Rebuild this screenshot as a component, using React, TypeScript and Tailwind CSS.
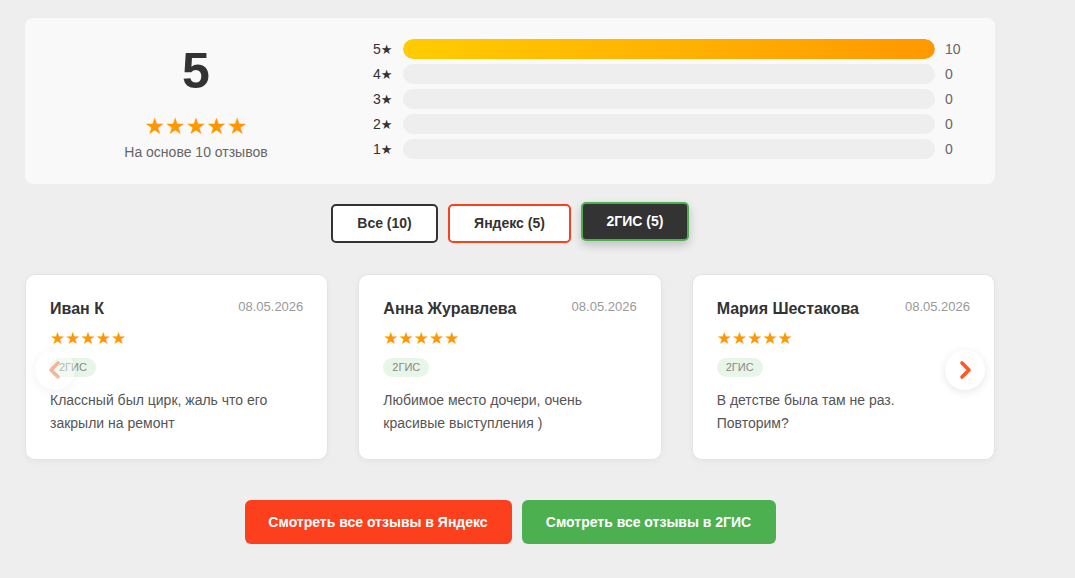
import React from "react";

type Review = { name: string; date: string; text: string };

const reviews: Review[] = [
  { name: "Иван К", date: "08.05.2026", text: "Классный был цирк, жаль что его закрыли на ремонт" },
  { name: "Анна Журавлева", date: "08.05.2026", text: "Любимое место дочери, очень красивые выступления )" },
  { name: "Мария Шестакова", date: "08.05.2026", text: "В детстве была там не раз. Повторим?" },
];

const distribution = [
  { stars: 5, count: 10 },
  { stars: 4, count: 0 },
  { stars: 3, count: 0 },
  { stars: 2, count: 0 },
  { stars: 1, count: 0 },
];

function Chevron({ dir }: { dir: "left" | "right" }) {
  return (
    <svg width="14" height="20" viewBox="0 0 14 20" fill="none">
      <path
        d={dir === "right" ? "M4 3l7 7-7 7" : "M10 3l-7 7 7 7"}
        stroke="#ff5722"
        strokeWidth="3.6"
        strokeLinecap="round"
        strokeLinejoin="round"
      />
    </svg>
  );
}

export default function App() {
  const total = 10;
  return (
    <div className="min-h-[578px] w-full bg-[#eeeeee] font-['Liberation_Sans','DejaVu_Sans',sans-serif]">
      <div className="w-[970px] ml-[25px] pt-[18px]">
        {/* Rating summary */}
        <div className="flex h-[166px] rounded-[8px] bg-[#f9f9f9] pl-[30px] pr-[30px]">
          <div className="flex w-[282px] flex-col items-center pt-[25px]">
            <div className="text-[50px] font-bold leading-[56px] text-[#333333]">5</div>
            <div className="mt-[15px] text-[23px] leading-[24px] text-[#ff9800]">★★★★★</div>
            <div className="mt-[5px] text-[14px] leading-[18px] text-[#666666]">На основе 10 отзывов</div>
          </div>
          <div className="ml-[36px] flex flex-1 flex-col gap-[5px] pt-[21px]">
            {distribution.map((d) => (
              <div key={d.stars} className="flex h-[20px] items-center">
                <div className="w-[20px] whitespace-nowrap text-[14px] leading-[20px] text-[#333333]">
                  {d.stars}
                  <span className="text-[13px]">★</span>
                </div>
                <div className="ml-[10px] h-[20px] flex-1 overflow-hidden rounded-full bg-[#eeeeee]">
                  <div
                    className="h-full rounded-full bg-gradient-to-r from-[#ffcc00] to-[#ff9800]"
                    style={{ width: `${(d.count / total) * 100}%` }}
                  />
                </div>
                <div className="ml-[10px] w-[20px] text-[14px] leading-[20px] text-[#666666]">{d.count}</div>
              </div>
            ))}
          </div>
        </div>

        {/* Source tabs */}
        <div className="mt-[20px] flex justify-center gap-[10px]">
          <button className="h-[39px] w-[107px] rounded-[5px] border-2 border-[#333333] bg-white text-[14px] font-bold text-[#333333]">
            Все (10)
          </button>
          <button className="h-[39px] w-[123px] rounded-[5px] border-2 border-[#fc3f1d] bg-white text-[14px] font-bold text-[#333333]">
            Яндекс (5)
          </button>
          <button className="-mt-[2px] h-[39px] w-[108px] rounded-[5px] border-2 border-[#4caf50] bg-[#333333] text-[14px] font-bold text-white shadow-[0_4px_10px_rgba(0,0,0,0.2)]">
            2ГИС (5)
          </button>
        </div>

        {/* Review carousel */}
        <div className="relative mt-[31px]">
          <div className="grid grid-cols-3 gap-[30px]">
            {reviews.map((r) => (
              <div
                key={r.name}
                className="rounded-[10px] border border-[#e4e4e4] bg-white p-[24px] shadow-[0_2px_6px_rgba(0,0,0,0.04)]"
              >
                <div className="flex items-start justify-between">
                  <div className="text-[16px] font-bold leading-[20px] text-[#333333]">{r.name}</div>
                  <div className="text-[13px] leading-[15px] text-[#999999]">{r.date}</div>
                </div>
                <div className="mt-[10px] text-[17px] leading-[20px] text-[#ff9800]">★★★★★</div>
                <div className="mt-[9px] inline-block rounded-full bg-[#e8f5e9] px-[9px] text-[11px] leading-[19px] text-[#888888]">
                  2ГИС
                </div>
                <p className="mt-[11px] text-[14px] leading-[23px] text-[#555555]">{r.text}</p>
              </div>
            ))}
          </div>
          <button className="absolute left-[10px] top-[76px] flex h-[40px] w-[40px] items-center justify-center rounded-full bg-white opacity-40 shadow-[0_2px_8px_rgba(0,0,0,0.12)]">
            <Chevron dir="left" />
          </button>
          <button className="absolute right-[10px] top-[76px] flex h-[40px] w-[40px] items-center justify-center rounded-full bg-white shadow-[0_2px_8px_rgba(0,0,0,0.1)]">
            <Chevron dir="right" />
          </button>
        </div>

        {/* External links */}
        <div className="mt-[40px] flex justify-center gap-[10px]">
          <a className="flex h-[44px] w-[267px] items-center justify-center rounded-[6px] bg-[#fc3f1d] text-[14px] font-bold text-white">
            Смотреть все отзывы в Яндекс
          </a>
          <a className="flex h-[44px] w-[254px] items-center justify-center rounded-[6px] bg-[#4caf50] text-[14px] font-bold text-white">
            Смотреть все отзывы в 2ГИС
          </a>
        </div>
      </div>
    </div>
  );
}
